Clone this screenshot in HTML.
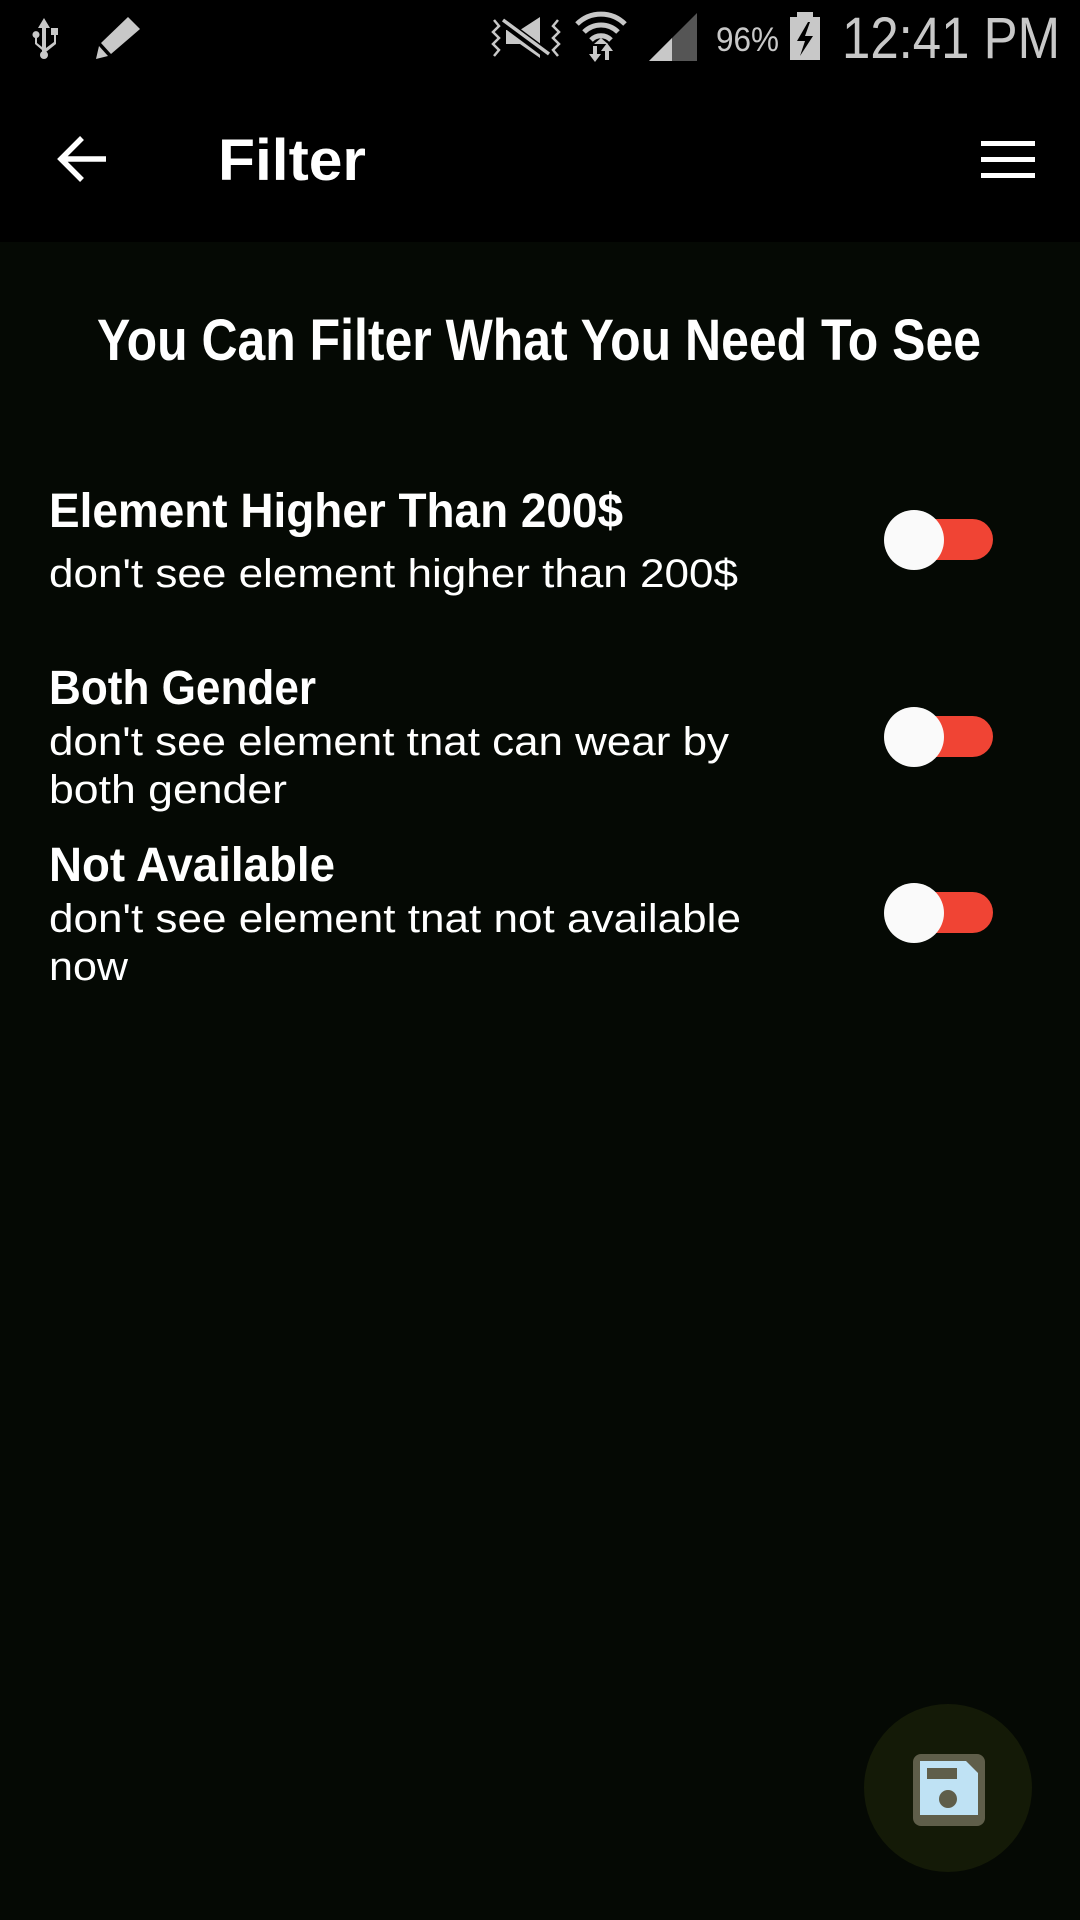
<!DOCTYPE html>
<html><head><meta charset="utf-8"><style>
html,body{margin:0;padding:0;background:#050904;}
body{width:1080px;height:1920px;overflow:hidden;position:relative;}
svg{position:absolute;left:0;top:0;}
</style></head><body>
<svg width="1080" height="1920" viewBox="0 0 1080 1920" xmlns="http://www.w3.org/2000/svg">
<rect x="0" y="0" width="1080" height="1920" fill="#050904"/>
<rect x="0" y="0" width="1080" height="242" fill="#000"/>
<g fill="#c8c8c8" stroke="none">
  <path d="M44 18 L50 28 L46 28 L46 48 L54 42 L54 35 L51 35 L51 28 L58 28 L58 35 L56 35 L56 44 L46 52 L46 54 L42 54 L42 50 L35 44 L35 38 A3.5 3.5 0 1 1 37 38 L37 43 L42 47 L42 28 L38 28 Z"/>
  <circle cx="44" cy="55" r="4"/>
  <path d="M128 17 L140 29 L111 54 L101 43 Z"/>
  <path d="M99 46 L108 56 L96 59 Z"/>
  <path d="M506 30 L520 30 L540 17 L540 58 L520 44 L506 44 Z"/>
  <path d="M501 20 L548 55" fill="none" stroke="#000" stroke-width="9"/>
  <path d="M503 20 L549 54" fill="none" stroke="#c8c8c8" stroke-width="3.5"/>
  <path d="M494 20 L499 26 L493 32 L499 38 L493 44 L499 50 L494 56" fill="none" stroke="#c8c8c8" stroke-width="2.5"/>
  <path d="M558 20 L553 26 L559 32 L553 38 L559 44 L553 50 L558 56" fill="none" stroke="#c8c8c8" stroke-width="2.5"/>
  <path d="M577 24 A34 34 0 0 1 625 24" fill="none" stroke="#c8c8c8" stroke-width="5"/>
  <path d="M584 32 A24 24 0 0 1 618 32" fill="none" stroke="#c8c8c8" stroke-width="5"/>
  <path d="M591 40 A14 14 0 0 1 611 40" fill="none" stroke="#c8c8c8" stroke-width="5"/>
  <path d="M594 44 L601 38 L608 44 Z"/>
  <rect x="593" y="46" width="4" height="10"/><path d="M589 54 L601 54 L595 62 Z"/>
  <rect x="605" y="50" width="4" height="10"/><path d="M601 51 L613 51 L607 43 Z"/>
  <path d="M649 61 L697 13 L697 61 Z" fill="#555"/>
  <path d="M649 61 L672 38 L672 61 Z"/>
</g>
<text x="716" y="51" font-family="Liberation Sans, sans-serif" font-size="34" fill="#c8c8c8" textLength="63" lengthAdjust="spacingAndGlyphs">96%</text>
<rect x="797" y="12" width="16" height="6" fill="#c8c8c8"/>
<rect x="790" y="17" width="30" height="43" fill="#c8c8c8"/>
<path d="M808 22 L797 41 L805 41 L800 56 L813 36 L805 36 L810 22 Z" fill="#000"/>
<text x="842" y="58" font-family="Liberation Sans, sans-serif" font-size="58" fill="#c8c8c8" textLength="218" lengthAdjust="spacingAndGlyphs">12:41 PM</text>

<path d="M62 159 L106 159 M82 138 L61 159 L82 180" fill="none" stroke="#fff" stroke-width="5.5"/>
<text x="218" y="180" font-family="Liberation Sans, sans-serif" font-weight="bold" font-size="58" fill="#fff" textLength="148" lengthAdjust="spacingAndGlyphs">Filter</text>
<rect x="981" y="141" width="54" height="5" fill="#fff"/>
<rect x="981" y="157" width="54" height="5" fill="#fff"/>
<rect x="981" y="173" width="54" height="5" fill="#fff"/>

<text x="97" y="360" font-family="Liberation Sans, sans-serif" font-weight="bold" font-size="58" fill="#fff" textLength="884" lengthAdjust="spacingAndGlyphs">You Can Filter What You Need To See</text>

<g font-family="Liberation Sans, sans-serif" fill="#fff">
  <text x="49" y="527" font-weight="bold" font-size="48" textLength="574" lengthAdjust="spacingAndGlyphs">Element Higher Than 200$</text>
  <text x="49" y="587" font-size="40" textLength="689" lengthAdjust="spacingAndGlyphs">don't see element higher than 200$</text>
  <text x="49" y="704" font-weight="bold" font-size="48" textLength="267" lengthAdjust="spacingAndGlyphs">Both Gender</text>
  <text x="49" y="755" font-size="40" textLength="680" lengthAdjust="spacingAndGlyphs">don't see element tnat can wear by</text>
  <text x="49" y="803" font-size="40" textLength="238" lengthAdjust="spacingAndGlyphs">both gender</text>
  <text x="49" y="881" font-weight="bold" font-size="48" textLength="286" lengthAdjust="spacingAndGlyphs">Not Available</text>
  <text x="49" y="932" font-size="40" textLength="692" lengthAdjust="spacingAndGlyphs">don't see element tnat not available</text>
  <text x="49" y="980" font-size="40" textLength="79" lengthAdjust="spacingAndGlyphs">now</text>
</g>

<g>
  <rect x="895" y="519" width="98" height="41" rx="20.5" fill="#f04434"/>
  <circle cx="914" cy="540" r="30" fill="#fafafa"/>
  <rect x="895" y="716" width="98" height="41" rx="20.5" fill="#f04434"/>
  <circle cx="914" cy="737" r="30" fill="#fafafa"/>
  <rect x="895" y="892" width="98" height="41" rx="20.5" fill="#f04434"/>
  <circle cx="914" cy="913" r="30" fill="#fafafa"/>
</g>

<circle cx="948" cy="1788" r="84" fill="#141a07"/>
<rect x="913" y="1754" width="72" height="72" rx="8" fill="#5f5e4a"/>
<path d="M920 1761 L966 1761 L978 1773 L978 1815 L920 1815 Z" fill="#bfe2f4"/>
<rect x="927" y="1768" width="30" height="11" fill="#5f5e4a"/>
<circle cx="948" cy="1799" r="9" fill="#5f5e4a"/>
</svg>
</body></html>
